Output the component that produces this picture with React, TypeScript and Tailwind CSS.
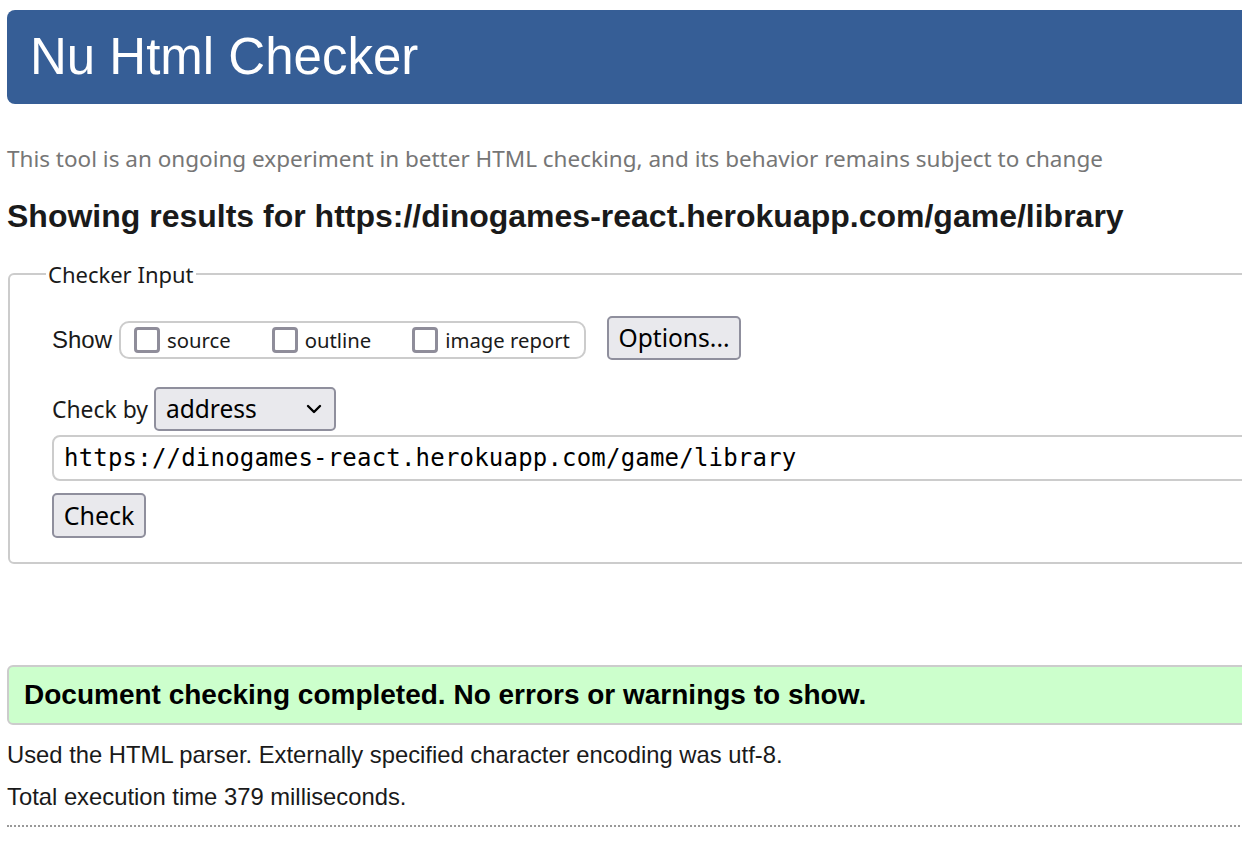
import React from "react";

const segoe = { fontFamily: '"Noto Sans", "Open Sans", sans-serif' };

function Box() {
  return (
    <span className="inline-block w-[26px] h-[26px] rounded-[4px] border-[3px] border-[#8f8d9a] bg-white shrink-0" />
  );
}

export default function App() {
  return (
    <div className="w-[1242px] h-[856px] overflow-hidden bg-white">
      <div className="w-[1400px] pl-[7px] pt-[10px] font-['Liberation_Sans',Arial,sans-serif] text-[#1a1a1a]">
        <div className="h-[94px] bg-[#365e96] rounded-l-[8px] flex items-center pl-[23px]">
          <h1 className="text-white text-[51px] leading-none font-normal pb-[2px]">Nu Html Checker</h1>
        </div>

        <p className="mt-[40px] text-[#767676] text-[22.5px] leading-[30px]" style={segoe}>
          This tool is an ongoing experiment in better HTML checking, and its behavior remains subject to change
        </p>

        <h2 className="mt-[23px] text-[32px] font-bold leading-[38px] text-[#1a1a1a]">
          Showing results for https://dinogames-react.herokuapp.com/game/library
        </h2>

        <fieldset className="mt-[24px] ml-[1px] border-2 border-[#cccccc] rounded-l-[6px] pl-[42px] pr-0 pt-0 pb-[24px]">
          <legend className="ml-[-6px] px-[2px] text-[22px] leading-[30px] text-[#1a1a1a]" style={segoe}>
            Checker Input
          </legend>

          <div className="flex items-center mt-[27px]">
            <span className="text-[24px] text-[#1a1a1a] mr-[7px] mt-[4px]">Show</span>
            <div className="mt-[4px] h-[38px] w-[467px] border-2 border-[#cccccc] rounded-[10px] flex items-center pl-[13px]" style={segoe}>
              <Box />
              <span className="ml-[7px] text-[20.3px] text-[#1a1a1a]">source</span>
              <span className="ml-[41px] flex"><Box /></span>
              <span className="ml-[7px] text-[20.3px] text-[#1a1a1a]">outline</span>
              <span className="ml-[41px] flex"><Box /></span>
              <span className="ml-[7px] text-[20.3px] text-[#1a1a1a]">image report</span>
            </div>
            <button
              className="ml-[21px] h-[44px] w-[134px] bg-[#e9e9ed] border-2 border-[#8f8f9d] rounded-[5px] text-[24.6px] text-black"
              style={segoe}
            >
              Options...
            </button>
          </div>

          <div className="flex items-center mt-[27px]" style={segoe}>
            <span className="text-[22.9px] text-[#1a1a1a] mr-[6px] mt-[2px]">Check by</span>
            <div className="h-[44px] w-[182px] bg-[#e9e9ed] border-2 border-[#8f8f9d] rounded-[5px] flex items-center justify-between pl-[10px] pr-[12px]">
              <span className="text-[24.5px] text-black">address</span>
              <svg width="16" height="10" viewBox="0 0 16 10" fill="none">
                <path d="M2 2 L8 8 L14 2" stroke="#000" strokeWidth="2.4" strokeLinecap="round" strokeLinejoin="round" />
              </svg>
            </div>
          </div>

          <div className="mt-[4px] h-[46px] border-2 border-[#cccccc] rounded-l-[8px] flex items-center pl-[10px]">
            <span className="text-[24px] text-black font-['DejaVu_Sans_Mono','Liberation_Mono',monospace] tracking-[0.2px]">
              https://dinogames-react.herokuapp.com/game/library
            </span>
          </div>

          <button
            className="mt-[12px] h-[45px] w-[94px] bg-[#e9e9ed] border-2 border-[#8f8f9d] rounded-[5px] text-[25px] text-black"
            style={segoe}
          >
            Check
          </button>
        </fieldset>

        <div className="mt-[101px] h-[60px] bg-[#ccffcc] border-2 border-[#cccccc] rounded-l-[6px] flex items-center pl-[15px]">
          <span className="text-[28px] font-bold text-black">Document checking completed. No errors or warnings to show.</span>
        </div>

        <p className="mt-[16px] text-[23.8px] leading-[28px] text-[#1a1a1a]">
          Used the HTML parser. Externally specified character encoding was utf-8.
        </p>
        <p className="mt-[14px] text-[23.8px] leading-[28px] text-[#1a1a1a]">Total execution time 379 milliseconds.</p>
        <div className="mt-[14px] border-t-2 border-dotted border-[#999999]" />
      </div>
    </div>
  );
}
